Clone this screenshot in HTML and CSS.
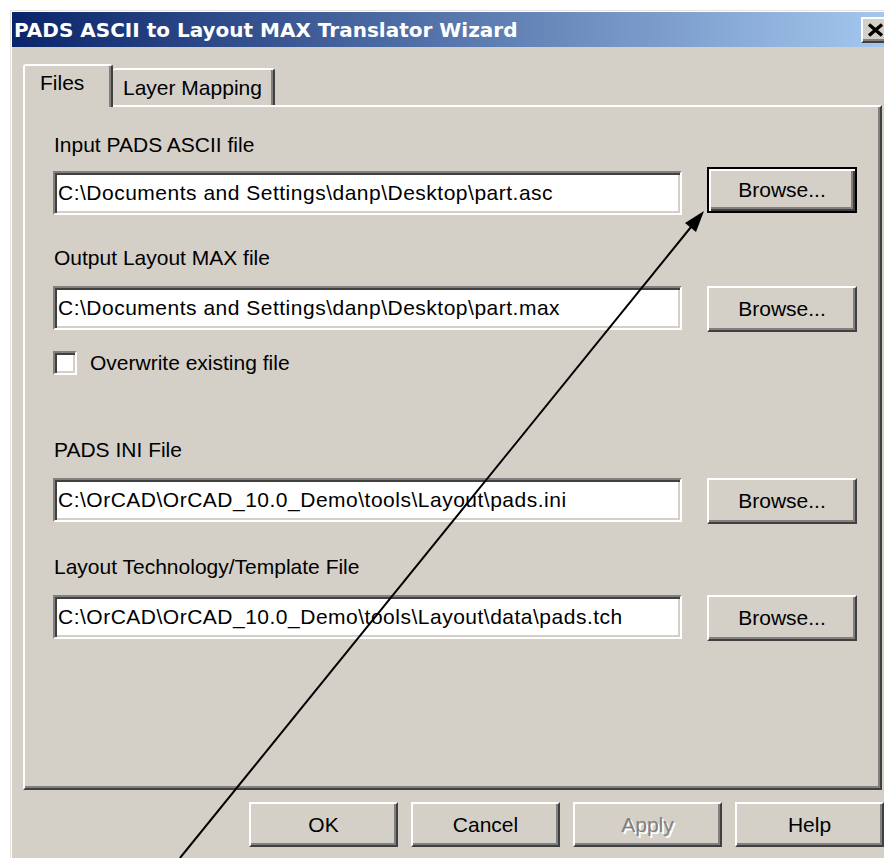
FILE: index.html
```html
<!DOCTYPE html>
<html lang="en">
<head>
<meta charset="utf-8">
<title>PADS ASCII to Layout MAX Translator Wizard</title>
<link rel="stylesheet" href="styles.css">
</head>
<body>
<div class="window">
  <div class="titlebar">
    <span class="title">PADS ASCII to Layout MAX Translator Wizard</span>
    <span class="close-btn">
      <svg width="18" height="14" viewBox="0 0 18 14"><path d="M2 1.5 L15 12.5 M15 1.5 L2 12.5" stroke="#000" stroke-width="3.4" fill="none"/></svg>
    </span>
  </div>
  <div class="client">
    <div class="tabs">
      <div class="tab tab-active">Files</div>
      <div class="tab tab-layers">Layer Mapping</div>
    </div>
    <div class="tab-page">
      <div class="field">
        <div class="label">Input PADS ASCII file</div>
        <div class="file-row first-row">
          <div class="edit">C:\Documents and Settings\danp\Desktop\part.asc</div>
          <div class="button button-default">Browse...</div>
        </div>
      </div>
      <div class="field">
        <div class="label">Output Layout MAX file</div>
        <div class="file-row">
          <div class="edit">C:\Documents and Settings\danp\Desktop\part.max</div>
          <div class="button">Browse...</div>
        </div>
      </div>
      <div class="check-row">
        <span class="check-box"></span>
        <span>Overwrite existing file</span>
      </div>
      <div class="field field-spaced">
        <div class="label">PADS INI File</div>
        <div class="file-row">
          <div class="edit">C:\OrCAD\OrCAD_10.0_Demo\tools\Layout\pads.ini</div>
          <div class="button">Browse...</div>
        </div>
      </div>
      <div class="field">
        <div class="label">Layout Technology/Template File</div>
        <div class="file-row">
          <div class="edit">C:\OrCAD\OrCAD_10.0_Demo\tools\Layout\data\pads.tch</div>
          <div class="button">Browse...</div>
        </div>
      </div>
    </div>
    <div class="actions">
      <div class="button">OK</div>
      <div class="button">Cancel</div>
      <div class="button button-disabled">Apply</div>
      <div class="button">Help</div>
    </div>
  </div>
</div>
<svg class="callout" width="884" height="858" viewBox="0 0 884 858">
  <line x1="180" y1="858" x2="691" y2="227" stroke="#000" stroke-width="2"/>
  <polygon points="704,211 696,232 685,223" fill="#000"/>
</svg>
</body>
</html>
```

FILE: styles.css
```css
html,
body {
  margin: 0;
  width: 884px;
  height: 858px;
  overflow: hidden;
  background: #fff;
}

body {
  position: relative;
  font-family: "Liberation Sans", Arial, sans-serif;
  font-size: 21px;
  color: #000;
}

/* dialog frame */
.window {
  margin: 10px 0 0 10px;
  width: 890px;
  height: 848px;
  box-sizing: border-box;
  padding: 2px 0 0 2px;
  background: #d4d0c8;
  box-shadow: inset 1px 1px #e4e1da, inset 2px 2px #fff;
}

.titlebar {
  display: flex;
  align-items: center;
  justify-content: space-between;
  height: 35px;
  padding: 0 7px 0 2px;
  background: linear-gradient(90deg, #0a246a 0%, #a6caf0 100%);
}

.title {
  font-family: "DejaVu Sans", sans-serif;
  font-weight: bold;
  font-size: 20px;
  color: #fff;
  white-space: nowrap;
}

.close-btn {
  display: flex;
  align-items: center;
  box-sizing: border-box;
  width: 32px;
  height: 26px;
  padding-left: 4px;
  background: #d4d0c8;
  border: 2px solid;
  border-color: #fff #404040 #404040 #fff;
  box-shadow: inset -2px -2px #808080;
}

.client {
  padding: 17px 0 0 11px;
}

/* tab strip */
.tabs {
  display: flex;
  align-items: flex-end;
  height: 41px;
}

.tab {
  box-sizing: border-box;
  height: 37px;
  padding: 6px 0 0 10px;
  line-height: 24px;
  white-space: nowrap;
  background: #d4d0c8;
  border-top: 2px solid #fff;
  border-right: 2px solid #404040;
  border-radius: 3px 3px 0 0;
  box-shadow: inset -2px 0 #808080;
}

.tab-layers {
  width: 162px;
}

.tab-active {
  position: relative;
  z-index: 1;
  width: 90px;
  height: 43px;
  margin-bottom: -2px;
  padding: 5px 0 0 15px;
  border-left: 2px solid #fff;
}

.tab-page {
  box-sizing: border-box;
  width: 859px;
  height: 685px;
  padding: 26px 0 0 28px;
  border: 2px solid;
  border-color: #fff #404040 #404040 #fff;
  box-shadow: inset -2px -2px #808080;
}

.field + .field {
  margin-top: 31px;
}

.field-spaced {
  margin-top: 63px;
}

.label {
  line-height: 24px;
  padding-left: 1px;
}

.file-row {
  display: flex;
  align-items: flex-start;
  margin-top: 16px;
}

.first-row {
  margin-top: 14px;
}

/* sunken edit box */
.edit {
  box-sizing: border-box;
  width: 629px;
  height: 44px;
  padding-left: 3px;
  line-height: 39px;
  letter-spacing: 0.5px;
  white-space: nowrap;
  overflow: hidden;
  background: #fff;
  border: 2px solid;
  border-color: #808080 #fff #fff #808080;
  box-shadow: inset 2px 2px #404040, inset -2px -2px #d4d0c8;
}

/* raised push button */
.button {
  display: flex;
  align-items: center;
  justify-content: center;
  box-sizing: border-box;
  width: 150px;
  height: 46px;
  background: #d4d0c8;
  border: 2px solid;
  border-color: #fff #404040 #404040 #fff;
  box-shadow: inset -2px -2px #808080;
}

.file-row .button {
  margin-left: 25px;
}

.file-row .button-default {
  margin-top: -4px;
  border-color: #000;
  box-shadow: inset 2px 2px #fff, inset -2px -2px #404040, inset -4px -4px #808080;
}

.button-disabled {
  color: #808080;
  text-shadow: 2px 2px 0 #fff;
}

.check-row {
  display: flex;
  align-items: center;
  gap: 13px;
  margin-top: 19px;
  line-height: 24px;
}

.check-box {
  box-sizing: border-box;
  width: 24px;
  height: 24px;
  background: #fff;
  border: 2px solid;
  border-color: #808080 #fff #fff #808080;
  box-shadow: inset 2px 2px #404040, inset -2px -2px #d4d0c8;
}

.actions {
  display: flex;
  justify-content: flex-end;
  gap: 13px;
  width: 861px;
  margin-top: 12px;
}

.actions .button {
  width: 149px;
  height: 45px;
}

/* annotation arrow drawn over the dialog */
.callout {
  position: absolute;
  left: 0;
  top: 0;
  pointer-events: none;
}
```
